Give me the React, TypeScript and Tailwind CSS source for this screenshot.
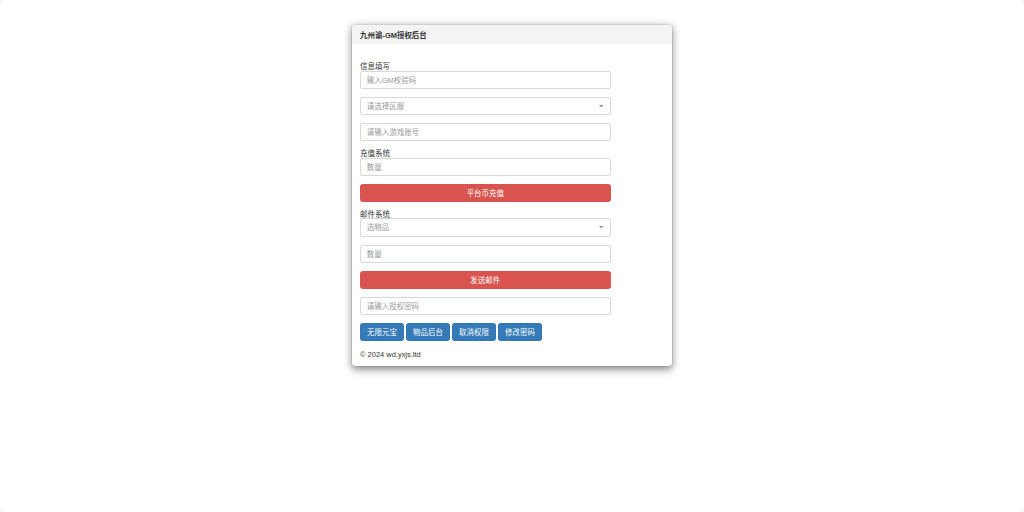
import { ReactNode } from 'react';

interface FieldProps {
  placeholder: string;
}

function TextField({ placeholder }: FieldProps) {
  return (
    <input
      type="text"
      placeholder={placeholder}
      className="block w-full h-[18.13px] mb-2 px-[5.8px] pt-px border border-[#d8d8d8] rounded-[2px] bg-white text-[#555] placeholder:text-[#999] outline-none focus:border-[#66afe9]"
    />
  );
}

function SelectField({ placeholder }: FieldProps) {
  return (
    <button
      type="button"
      className="flex items-center justify-between w-full h-[18.13px] mb-2 px-[5.8px] border border-[#d8d8d8] rounded-[2px] bg-white text-[#999]"
    >
      <span className="pt-[2.5px]">{placeholder}</span>
      <svg viewBox="0 0 8 4" className="w-[4.4px] h-[2.2px]" fill="#888">
        <path d="M0 0h8L4 4z" />
      </svg>
    </button>
  );
}

function DangerButton({ children }: { children: ReactNode }) {
  return (
    <button
      type="button"
      className="flex items-center justify-center w-full h-[18.13px] mb-2 pt-[2.5px] border border-[#d9534f] rounded-[2.5px] bg-[#d9534f] text-white"
    >
      {children}
    </button>
  );
}

function SectionLabel({ children }: { children: ReactNode }) {
  return <div className="h-[8.6px] leading-[10.6px] text-[#333]">{children}</div>;
}

const actions = ['无限元宝', '物品后台', '取消权限', '修改密码'];

export default function App() {
  return (
    <div className="h-screen overflow-hidden bg-[#f3f3f3]">
      <div className="h-full rounded-[5px] bg-white pt-[25px] font-['Liberation_Sans','Noto_Sans_CJK_SC',sans-serif] text-[7.47px] leading-[10.67px]">
        <div className="w-[320px] h-[341px] mx-auto rounded-[3px] overflow-hidden bg-white shadow-[0_2.5px_8px_rgba(0,0,0,0.5),0_0_1px_rgba(0,0,0,0.5)]">
          <div className="h-[19px] px-2 pt-[4px] flex items-center bg-[#f4f4f4] font-bold text-[#333]">
            九州谕-GM授权后台
          </div>

          <div className="pl-2 pt-[18px]">
            <div className="w-[250.6px]">
              <SectionLabel>信息填写</SectionLabel>
              <TextField placeholder="输入GM校验码" />
              <SelectField placeholder="请选择区服" />
              <TextField placeholder="请输入游戏账号" />

              <SectionLabel>充值系统</SectionLabel>
              <TextField placeholder="数量" />
              <DangerButton>平台币充值</DangerButton>

              <SectionLabel>邮件系统</SectionLabel>
              <SelectField placeholder="选物品" />
              <TextField placeholder="数量" />
              <DangerButton>发送邮件</DangerButton>
              <TextField placeholder="请输入授权密码" />

              <div className="flex gap-[2px]">
                {actions.map((action) => (
                  <button
                    key={action}
                    type="button"
                    className="flex items-center justify-center w-[44px] h-[18.13px] pt-[2.5px] border border-[#3276b1] rounded-[2.5px] bg-[#337ab7] text-white whitespace-nowrap"
                  >
                    {action}
                  </button>
                ))}
              </div>
            </div>
            <p className="mt-[9px] text-[#333]">© 2024 wd.yxjs.ltd</p>
          </div>
        </div>
      </div>
    </div>
  );
}
